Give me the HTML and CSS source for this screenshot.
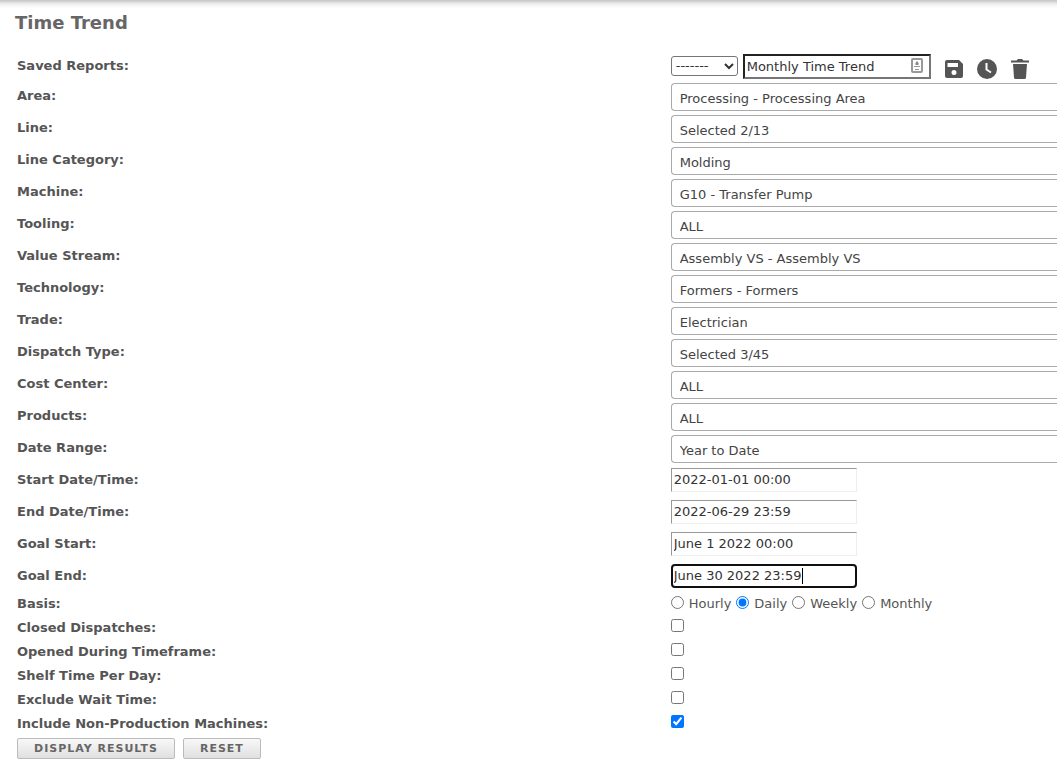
FILE: index.html
```html
<!DOCTYPE html>
<html lang="en">
<head>
<meta charset="UTF-8">
<meta name="viewport" content="width=device-width, initial-scale=1.0">
<title>Time Trend</title>
<link rel="stylesheet" href="styles.css">
</head>
<body>

<form class="report">
    <h1>Time Trend</h1>

    <div class="row saved">
        <label for="reportName">Saved Reports:</label>
        <div class="tools">
            <select class="saved-select" aria-label="Saved report"><option>-------</option></select>
            <div class="name-box">
                <input type="text" id="reportName" class="name-input" value="Monthly Time Trend">
                <svg class="card" width="12" height="16" viewBox="0 0 12 16">
                    <rect x="1" y="1" width="10" height="13" rx="1" fill="#fff" stroke="#999" stroke-width="2"/>
                    <path d="M6 3l1.500 2v2h-3V5z" fill="#888"/>
                    <path d="M3 8.500h6M4 11.500h4" stroke="#999" fill="none"/>
                </svg>
            </div>
            <button type="button" class="icon" aria-label="Save">
                <svg width="18" height="18" viewBox="0 0 18 18"><path fill="#555" fill-rule="evenodd" d="M2 0h12l4 4v12a2 2 0 0 1-2 2H2a2 2 0 0 1-2-2V2a2 2 0 0 1 2-2zM2.500 3v4H13V3zM9 10a2.500 2.500 0 1 0 0 5 2.500 2.500 0 0 0 0-5z"/></svg>
            </button>
            <button type="button" class="icon" aria-label="Schedule">
                <svg width="20" height="20" viewBox="0 0 20 20"><circle cx="10" cy="10" r="10" fill="#555"/><path d="M9.500 4v6.500l4.500 3" fill="none" stroke="#fff" stroke-width="2"/></svg>
            </button>
            <button type="button" class="icon" aria-label="Delete">
                <svg width="18" height="20" viewBox="0 0 18 20"><path fill="#555" d="M0 1.500h5.500l1.500-1.500h4l1.500 1.500H18v2H0zM2 5h14l-1 13.500a1.500 1.500 0 0 1-1.500 1.500h-9A1.500 1.500 0 0 1 3 18.500z"/></svg>
            </button>
        </div>
    </div>

    <div class="row">
        <label for="area">Area:</label>
        <select id="area" class="filter"><option>Processing - Processing Area</option></select>
    </div>
    <div class="row">
        <label for="line">Line:</label>
        <select id="line" class="filter"><option>Selected 2/13</option></select>
    </div>
    <div class="row">
        <label for="lineCategory">Line Category:</label>
        <select id="lineCategory" class="filter"><option>Molding</option></select>
    </div>
    <div class="row">
        <label for="machine">Machine:</label>
        <select id="machine" class="filter"><option>G10 - Transfer Pump</option></select>
    </div>
    <div class="row">
        <label for="tooling">Tooling:</label>
        <select id="tooling" class="filter"><option>ALL</option></select>
    </div>
    <div class="row">
        <label for="valueStream">Value Stream:</label>
        <select id="valueStream" class="filter"><option>Assembly VS - Assembly VS</option></select>
    </div>
    <div class="row">
        <label for="technology">Technology:</label>
        <select id="technology" class="filter"><option>Formers - Formers</option></select>
    </div>
    <div class="row">
        <label for="trade">Trade:</label>
        <select id="trade" class="filter"><option>Electrician</option></select>
    </div>
    <div class="row">
        <label for="dispatchType">Dispatch Type:</label>
        <select id="dispatchType" class="filter"><option>Selected 3/45</option></select>
    </div>
    <div class="row">
        <label for="costCenter">Cost Center:</label>
        <select id="costCenter" class="filter"><option>ALL</option></select>
    </div>
    <div class="row">
        <label for="products">Products:</label>
        <select id="products" class="filter"><option>ALL</option></select>
    </div>
    <div class="row">
        <label for="dateRange">Date Range:</label>
        <select id="dateRange" class="filter"><option>Year to Date</option></select>
    </div>

    <div class="row date">
        <label for="startDate">Start Date/Time:</label>
        <input type="text" id="startDate" class="date-input" value="2022-01-01 00:00">
    </div>
    <div class="row date">
        <label for="endDate">End Date/Time:</label>
        <input type="text" id="endDate" class="date-input" value="2022-06-29 23:59">
    </div>
    <div class="row date">
        <label for="goalStart">Goal Start:</label>
        <input type="text" id="goalStart" class="date-input" value="June 1 2022 00:00">
    </div>
    <div class="row date">
        <label for="goalEnd">Goal End:</label>
        <div class="date-box">
            <input type="text" id="goalEnd" class="date-input active" value="June 30 2022 23:59">
            <span class="caret"></span>
        </div>
    </div>

    <div class="row basis" role="radiogroup" aria-labelledby="basis">
        <span class="label" id="basis">Basis:</span>
        <div class="radios">
            <label><input type="radio" name="basis">Hourly</label>
            <label><input type="radio" name="basis" checked>Daily</label>
            <label><input type="radio" name="basis">Weekly</label>
            <label><input type="radio" name="basis">Monthly</label>
        </div>
    </div>
    <div class="row check">
        <label for="closed">Closed Dispatches:</label>
        <input type="checkbox" id="closed">
    </div>
    <div class="row check">
        <label for="opened">Opened During Timeframe:</label>
        <input type="checkbox" id="opened">
    </div>
    <div class="row check">
        <label for="shelf">Shelf Time Per Day:</label>
        <input type="checkbox" id="shelf">
    </div>
    <div class="row check">
        <label for="exclude">Exclude Wait Time:</label>
        <input type="checkbox" id="exclude">
    </div>
    <div class="row check">
        <label for="include">Include Non-Production Machines:</label>
        <input type="checkbox" id="include" checked>
    </div>

    <div class="actions">
        <button type="button">DISPLAY RESULTS</button>
        <button type="reset">RESET</button>
    </div>
</form>

</body>
</html>
```

FILE: styles.css
```css
body {
    margin: 0;
    background: #fff;
    color: #444;
    font-family: Verdana, "DejaVu Sans", sans-serif;
    font-size: 13px;
    line-height: 16px;
}
/* shadow of the header bar above */
body::before {
    content: "";
    display: block;
    height: 8px;
    background: linear-gradient(#c4c4c4, #eee 50%, #fff);
}
input, select, button {
    box-sizing: border-box;
    margin: 0;
    font: inherit;
    color: #333;
}
.report {
    padding-left: 17px;
}
h1 {
    margin: 0 -2px;
    padding: 5px 0 17px;
    font-size: 18px;
    line-height: 20px;
    color: #666;
}
.row {
    display: grid;
    grid-template-columns: 22fr 13fr;
    align-items: center;
    height: 32px;
}
.row > label, .label {
    font-weight: bold;
    color: #555;
    padding-bottom: 2px;
}
.saved {
    height: 31px;
    align-items: start;
}
.saved > label {
    padding-top: 8px;
}
.tools {
    display: flex;
    align-items: center;
}
.saved-select {
    width: 67px;
    height: 20px;
    margin: 2px 5px 0 0;
    padding: 0;
    border: 1px solid #767676;
    border-radius: 3px;
    background: #fff;
}
.name-box {
    position: relative;
    margin: 3px 14px 0 0;
}
.name-input {
    display: block;
    width: 188px;
    height: 25px;
    padding: 1px 2px;
    border: 2px solid;
    border-color: #222 #767676 #767676 #222;
}
.card {
    position: absolute;
    right: 8px;
    top: 4px;
}
.icon {
    display: flex;
    margin: 9px 14px 0 0;
    padding: 0;
    border: 0;
    background: none;
    cursor: pointer;
}
/* filters run to the edge of the window, so they have no right side */
.filter {
    width: 100%;
    height: 28px;
    padding: 4px 8px 0;
    border: 1px solid #aaa;
    border-right: 0;
    border-radius: 4px 0 0 4px;
    background: #fff;
    color: #444;
    appearance: none;
}
.date-box {
    position: relative;
}
.date-input {
    display: block;
    width: 186px;
    height: 24px;
    padding: 0 2px 2px;
    border: 1px solid;
    border-color: #999 #eee #eee #999;
}
.date > .date-input, .date-box {
    margin-bottom: 2px;
}
.active {
    padding: 0 1px 2px;
    border: 2px solid #101010;
    border-radius: 4px;
}
.caret {
    position: absolute;
    left: 131px;
    top: 4px;
    width: 1px;
    height: 16px;
    background: #000;
}
.basis {
    height: 22px;
}
.basis .label {
    padding-bottom: 0;
}
.check > label {
    padding: 2px 0 0;
}
.radios {
    display: flex;
    gap: 5px;
}
.radios label {
    display: flex;
    align-items: center;
    gap: 5px;
    color: #555;
}
input[type="radio"], input[type="checkbox"] {
    width: 13px;
    height: 13px;
    accent-color: #0075ff;
}
input[type="radio"] {
    margin-bottom: 4px;
}
.check {
    height: 24px;
}
.check input {
    margin-bottom: 3px;
}
.actions {
    display: flex;
    gap: 8px;
    padding: 3px 0 16px;
}
.actions button {
    height: 21px;
    padding: 0 16px;
    border: 1px solid #bbb;
    border-radius: 2px;
    background: linear-gradient(#f8f8f8, #e0e0e0);
    color: #666;
    font-size: 11px;
    font-weight: bold;
    letter-spacing: 1px;
    cursor: pointer;
}
```
